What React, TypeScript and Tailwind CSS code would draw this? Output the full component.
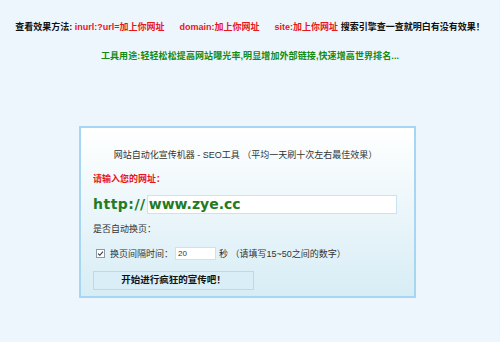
import { useState } from "react";

const cjk = "font-['Liberation_Sans','Noto_Sans_CJK_SC',sans-serif]";
const verdana = "font-['DejaVu_Sans','Noto_Sans_CJK_SC',sans-serif]";

export default function App() {
  const [url, setUrl] = useState("www.zye.cc");
  const [auto, setAuto] = useState(true);
  const [secs, setSecs] = useState("20");

  return (
    <div className={`min-h-[342px] w-full bg-[#eef6fd] pt-[21px] ${cjk}`}>
      <p className="text-center text-[9px] font-bold leading-[12px] text-[#111]">
        查看效果方法:{" "}
        <span className="text-[#e8151b]">inurl:?url=加上你网址</span>
        <span className="ml-[15px] text-[#e8151b]">domain:加上你网址</span>
        <span className="ml-[15px] text-[#e8151b]">site:加上你网址</span>{" "}
        搜索引擎查一查就明白有没有效果！
      </p>
      <p className="mt-[17px] text-center text-[9px] font-bold leading-[12px] tracking-[0.1px] text-[#138a13]">
        工具用途:轻轻松松提高网站曝光率,明显增加外部链接,快速增高世界排名...
      </p>

      <div className="ml-[79px] mt-[64px] h-[172px] w-[337px] border-2 border-[#a6d6f1] bg-linear-to-b from-white to-[#d7edf5] pl-[12px] pr-[16px] pt-[21px]">
        <p className="text-center text-[9px] leading-[12px] text-[#333]">
          网站自动化宣传机器 - SEO工具 （平均一天刷十次左右最佳效果）
        </p>
        <p className="mt-[12px] text-[9px] font-bold leading-[12px] text-[#e8151b]">请输入您的网址：</p>
        <div className="mt-[9px] flex items-center">
          <span className={`${verdana} text-[14px] font-bold leading-[20px] tracking-[0.5px] text-[#237a23]`}>
            http://
          </span>
          <input
            value={url}
            onChange={(e) => setUrl(e.target.value)}
            className={`${verdana} ml-[1px] h-[19px] w-[250px] border border-[#c9e3f3] bg-white px-[1px] text-[14px] font-bold leading-[18px] text-[#237a23] outline-none`}
          />
        </div>
        <p className="mt-[9px] text-[9px] leading-[12px] text-[#333]">是否自动换页：</p>
        <div className="mt-[12px] flex items-center text-[9px] leading-[12px] text-[#333]">
          <button
            type="button"
            onClick={() => setAuto(!auto)}
            className="ml-[3px] flex h-[9px] w-[9px] items-center justify-center border border-[#8a9aa8] bg-white"
          >
            {auto && (
              <svg viewBox="0 0 8 8" className="h-[7px] w-[7px]">
                <path d="M1.2 4.2 L3.2 6 L6.8 1.8" fill="none" stroke="#333" strokeWidth="1.2" />
              </svg>
            )}
          </button>
          <span className="ml-[5px]">换页间隔时间：</span>
          <input
            value={secs}
            onChange={(e) => setSecs(e.target.value)}
            className="ml-[2px] h-[13px] w-[41px] border border-[#c9e3f3] bg-white px-[2px] text-[8px] text-[#333] outline-none"
          />
          <span className="ml-[3px]">秒 （请填写15~50之间的数字）</span>
        </div>
        <button
          type="button"
          className="mt-[11px] h-[19px] w-[161px] border border-[#b3dcf0] bg-[#d9eef7] text-[9.5px] font-bold text-[#111]"
        >
          开始进行疯狂的宣传吧！
        </button>
      </div>
    </div>
  );
}
